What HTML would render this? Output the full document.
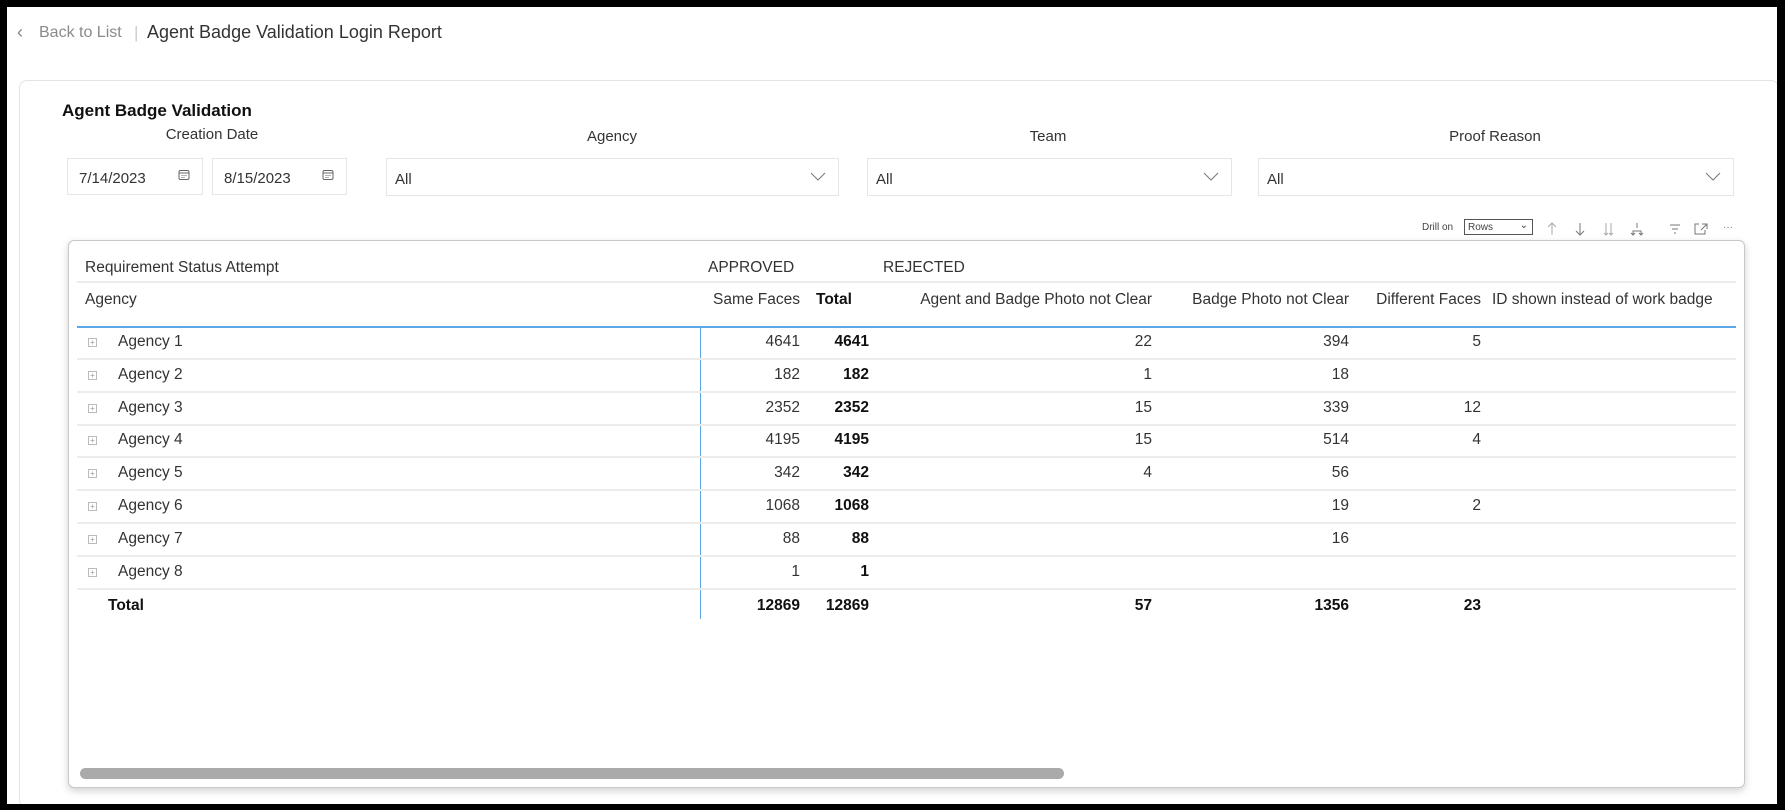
<!DOCTYPE html>
<html style="width:1785px;height:810px;overflow:hidden"><head><meta charset="utf-8">
<style>
*{box-sizing:border-box;margin:0;padding:0}
body{width:1785px;height:810px;background:#fff;font-family:"Liberation Sans",sans-serif;color:#252423;position:relative;overflow:hidden}
.a{position:absolute;white-space:nowrap}
.card{position:absolute;left:19px;top:80px;width:1760px;height:728px;border:1px solid #e3e3e3;border-radius:8px;background:#fff}
.box{position:absolute;border:1px solid #e6e6e6;background:#fff;font-size:15px;color:#333}
.lbl{position:absolute;font-size:15px;color:#333;transform:translateX(-50%);white-space:nowrap}
.chev{position:absolute;right:12px;top:9px}
.vis{position:absolute;left:68px;top:240px;width:1677px;height:548px;border:1px solid #c8c8c8;border-radius:6px;background:#fff;box-shadow:0 3px 8px rgba(0,0,0,.18)}
.t{position:absolute;font-size:15.5px;color:#333;white-space:nowrap}
.r{text-align:right}
.b{font-weight:bold;color:#111}
.hl{position:absolute;left:77px;width:1659px;height:2px;background:#ececec}
.ex{position:absolute;left:88px;width:9px;height:9px;border:1px solid #bbb;font-size:8px;line-height:7px;text-align:center;color:#999}
.fr{position:absolute;background:#000;z-index:10}
</style></head><body>
<div class="a" style="left:17px;top:22px;font-size:18px;color:#888">‹</div>
<div class="a" style="left:39px;top:24px;font-size:16px;color:#8a8a8a">Back to List</div>
<div class="a" style="left:134px;top:23px;font-size:17px;color:#ccc">|</div>
<div class="a" style="left:147px;top:22px;font-size:18px;color:#333">Agent Badge Validation Login Report</div>
<div class="card"></div>
<div class="a" style="left:62px;top:101px;font-size:17px;font-weight:bold;color:#111">Agent Badge Validation</div>
<div class="lbl" style="left:212px;top:126px">Creation Date</div>
<div class="lbl" style="left:612px;top:128px">Agency</div>
<div class="lbl" style="left:1048px;top:128px">Team</div>
<div class="lbl" style="left:1495px;top:128px">Proof Reason</div>
<div class="box" style="left:67px;top:158px;width:136px;height:37px;padding:11px 0 0 11px">7/14/2023<svg class="chev" style="top:10px" width="12" height="12" viewBox="0 0 12 12"><rect x="1" y="1.5" width="10" height="9" rx="1.5" fill="none" stroke="#666"/><path d="M1 4h10M3.5 6.5h1M5.5 6.5h1M7.5 6.5h1M3.5 8.5h1M5.5 8.5h1" stroke="#666"/></svg></div>
<div class="box" style="left:212px;top:158px;width:135px;height:37px;padding:11px 0 0 11px">8/15/2023<svg class="chev" style="top:10px" width="12" height="12" viewBox="0 0 12 12"><rect x="1" y="1.5" width="10" height="9" rx="1.5" fill="none" stroke="#666"/><path d="M1 4h10M3.5 6.5h1M5.5 6.5h1M7.5 6.5h1M3.5 8.5h1M5.5 8.5h1" stroke="#666"/></svg></div>
<div class="box" style="left:386px;top:158px;width:453px;height:38px;padding:12px 0 0 8px">All<svg class="chev" style="top:13px" width="16" height="10" viewBox="0 0 16 10"><path d="M1 1l7 7 7-7" fill="none" stroke="#777"/></svg></div>
<div class="box" style="left:867px;top:158px;width:365px;height:38px;padding:12px 0 0 8px">All<svg class="chev" style="top:13px" width="16" height="10" viewBox="0 0 16 10"><path d="M1 1l7 7 7-7" fill="none" stroke="#777"/></svg></div>
<div class="box" style="left:1258px;top:158px;width:476px;height:38px;padding:12px 0 0 8px">All<svg class="chev" style="top:13px" width="16" height="10" viewBox="0 0 16 10"><path d="M1 1l7 7 7-7" fill="none" stroke="#777"/></svg></div>
<div class="a" style="left:1422px;top:222px;font-size:10px;color:#444">Drill on</div>
<div class="a" style="left:1464px;top:219px;width:69px;height:16px;border:1px solid #555;font-size:10px;padding:2px 0 0 3px;color:#444">Rows<span style="position:absolute;right:4px;top:0;font-size:10px">⌄</span></div>
<svg class="a" style="left:1545px;top:220px" width="200" height="18" viewBox="0 0 200 18">
<g fill="none" stroke="#aaa" stroke-width="1">
<path d="M7 3v12M3 7l4-4 4 4"/>
<path d="M35 3v12M31 11l4 4 4-4" stroke="#777"/>
<path d="M61 3v12M66 3v12M59 13l2 2 2-2M64 13l2 2 2-2"/>
<path d="M92 3v5M88 15v-4h8v4M86 13l2 2 2-2M94 13l2 2 2-2" stroke="#777"/>
<path d="M125 5h10M127 9h6M129 13h2" stroke="#777"/>
<path d="M154 4h-4v10h10v-4M157 4h5v5M162 4l-6 6" stroke="#777"/>
</g><text x="178" y="10" font-size="10" fill="#777" font-family="Liberation Sans">···</text></svg>
<div class="vis"></div>
<div class="t" style="left:85px;top:259px">Requirement Status Attempt</div>
<div class="t" style="left:708px;top:259px">APPROVED</div>
<div class="t" style="left:883px;top:259px">REJECTED</div>
<div class="hl" style="top:281px"></div>
<div class="t" style="left:85px;top:291px">Agency</div>
<div class="t r" style="left:690px;width:110px;top:291px">Same Faces</div>
<div class="t b" style="left:816px;top:291px">Total</div>
<div class="t r" style="left:870px;width:282px;top:291px">Agent and Badge Photo not Clear</div>
<div class="t r" style="left:1160px;width:189px;top:291px">Badge Photo not Clear</div>
<div class="t r" style="left:1355px;width:126px;top:291px">Different Faces</div>
<div style="position:absolute;left:1492px;top:291px;width:242px;overflow:hidden" class="t">ID shown instead of work badge</div>
<div style="position:absolute;left:77px;top:326px;width:1659px;height:2px;background:#5ba7e8"></div>
<div style="position:absolute;left:700px;top:327px;width:1px;height:292px;background:#5ba7e8"></div>
<div id="rows"></div>
<script>
var d=[["Agency 1",4641,22,394,5],["Agency 2",182,1,18,""],["Agency 3",2352,15,339,12],["Agency 4",4195,15,514,4],["Agency 5",342,4,56,""],["Agency 6",1068,"",19,2],["Agency 7",88,"",16,""],["Agency 8",1,"","",""]];
var h="";
d.forEach(function(r,i){var y=333+i*32.8;
h+='<div class="ex" style="top:'+(y+5)+'px">+</div>';
h+='<div class="t" style="left:118px;top:'+y+'px">'+r[0]+'</div>';
h+='<div class="t r" style="left:700px;width:100px;top:'+y+'px">'+r[1]+'</div>';
h+='<div class="t r b" style="left:800px;width:69px;top:'+y+'px">'+r[1]+'</div>';
h+='<div class="t r" style="left:1000px;width:152px;top:'+y+'px">'+r[2]+'</div>';
h+='<div class="t r" style="left:1200px;width:149px;top:'+y+'px">'+r[3]+'</div>';
h+='<div class="t r" style="left:1400px;width:81px;top:'+y+'px">'+r[4]+'</div>';
h+='<div class="hl" style="top:'+(y+25)+'px"></div>';});
var y=597;
h+='<div class="t b" style="left:108px;top:'+y+'px">Total</div>';
h+='<div class="t r b" style="left:700px;width:100px;top:'+y+'px">12869</div>';
h+='<div class="t r b" style="left:800px;width:69px;top:'+y+'px">12869</div>';
h+='<div class="t r b" style="left:1000px;width:152px;top:'+y+'px">57</div>';
h+='<div class="t r b" style="left:1200px;width:149px;top:'+y+'px">1356</div>';
h+='<div class="t r b" style="left:1400px;width:81px;top:'+y+'px">23</div>';
document.getElementById("rows").innerHTML=h;
</script>
<div style="position:absolute;left:80px;top:768px;width:984px;height:11px;border-radius:6px;background:#aaa"></div>
<div class="fr" style="left:0;top:0;width:1785px;height:7px"></div>
<div class="fr" style="left:0;top:0;width:7px;height:810px"></div>
<div class="fr" style="left:1777px;top:0;width:8px;height:810px"></div>
<div class="fr" style="left:0;top:804px;width:1785px;height:6px"></div>
</body></html>
